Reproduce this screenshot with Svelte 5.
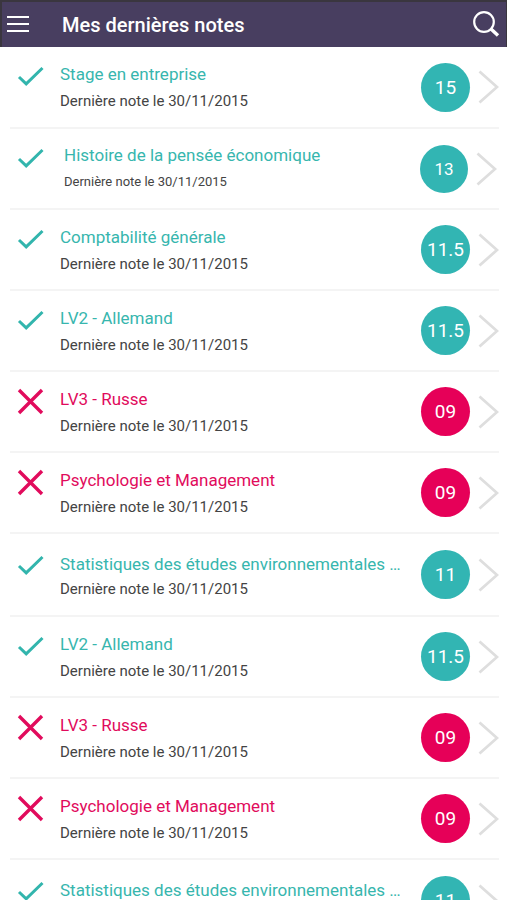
<script>
    const date = '30/11/2015';

    const notes = [
        { title: 'Stage en entreprise', note: '15', passed: true },
        { title: 'Histoire de la pensée économique', note: '13', passed: true, compact: true },
        { title: 'Comptabilité générale', note: '11.5', passed: true },
        { title: 'LV2 - Allemand', note: '11.5', passed: true },
        { title: 'LV3 - Russe', note: '09', passed: false },
        { title: 'Psychologie et Management', note: '09', passed: false },
        { title: 'Statistiques des études environnementales …', note: '11', passed: true, long: true },
        { title: 'LV2 - Allemand', note: '11.5', passed: true },
        { title: 'LV3 - Russe', note: '09', passed: false },
        { title: 'Psychologie et Management', note: '09', passed: false },
        { title: 'Statistiques des études environnementales …', note: '11', passed: true, long: true }
    ];
</script>

<style>
    :global(body) {
        font-family: Roboto, sans-serif;
        background: #fff;
        color: #444;
    }

    .screen {
        height: 100vh;
        display: flex;
        flex-direction: column;
        overflow: hidden;
    }

    header {
        display: flex;
        align-items: center;
        flex: none;
        height: 47px;
        box-sizing: border-box;
        padding: 0 6px 0 4px;
        background: #483e60;
        border: solid #3a363f;
        border-width: 2px 1px 0 2px;
    }

    header button {
        display: flex;
        padding: 0;
        border: none;
        background: none;
        cursor: pointer;
    }

    h1 {
        flex: 1;
        margin: 0 0 0 32px;
        color: #fff;
        font-size: 20px;
        line-height: 24px;
        font-weight: 500;
    }

    ul {
        flex: 1;
        min-height: 0;
        overflow: hidden;
        margin: 0;
        padding: 0 8px 0 10px;
        list-style: none;
    }

    li {
        border-bottom: 2px solid #f4f4f4;
    }

    .row {
        display: flex;
        align-items: center;
        height: 79px;
        color: inherit;
        text-decoration: none;
    }

    li:first-child .row {
        height: 80px;
    }

    .status {
        flex: none;
        align-self: flex-start;
        margin: 16px 16px 0 7px;
    }

    .text {
        flex: 1;
        min-width: 0;
        align-self: flex-start;
        padding-top: 16px;
    }

    .title, .date {
        display: block;
        white-space: nowrap;
    }

    .title {
        margin-bottom: 6px;
        font-size: 17px;
        line-height: 22px;
        color: #37b6ae;
    }

    .date {
        font-size: 15px;
        line-height: 20px;
    }

    .note {
        flex: none;
        display: flex;
        align-items: center;
        justify-content: center;
        width: 49px;
        height: 49px;
        margin-right: 8px;
        border-radius: 50%;
        background: #32b5b3;
        color: #fff;
        font-size: 19px;
    }

    .failed .title {
        color: #e10b5c;
    }

    .failed .note {
        background: #e60058;
    }

    .chevron {
        flex: none;
    }

    .compact .text {
        padding: 15px 0 0 4px;
    }

    .compact .date {
        font-size: 13px;
    }

    .compact .note {
        width: 48px;
        height: 48px;
        font-size: 17px;
    }

    .compact .chevron {
        margin-right: 2px;
    }

    .long {
        height: 80px;
    }

    li:nth-child(n + 7) .long {
        height: 81px;
    }

    .long .status {
        margin-top: 18px;
    }

    .long .text {
        padding-top: 19px;
    }

    .long .title {
        margin-bottom: 4px;
    }
</style>

<div class="screen">
    <header>
        <button aria-label="Menu">
            <svg width="24" height="20" viewBox="0 0 24 20" stroke="#fff" stroke-width="2">
                <path d="M1 2H23M1 9H23M1 16H23" />
            </svg>
        </button>
        <h1>Mes dernières notes</h1>
        <button aria-label="Rechercher">
            <svg width="28" height="28" viewBox="0 0 28 28" fill="none" stroke="#fff">
                <circle cx="12" cy="11" r="9.8" stroke-width="2.2" />
                <path d="M18.5 17.5L26 24.5" stroke-width="3.4" />
            </svg>
        </button>
    </header>

    <ul>
        {#each notes as item}
            <li>
                <a class="row" class:failed={!item.passed} class:compact={item.compact} class:long={item.long} href="#note">
                    <svg class="status" width="27" height="27" viewBox="0 0 27 27" fill="none">
                        {#if item.passed}
                            <path d="M2 14L9.2 20.8L25.5 5" stroke="#32b5ad" stroke-width="3" />
                        {:else}
                            <path d="M2 2L25 25M25 2L2 25" stroke="#e10b5c" stroke-width="3.4" />
                        {/if}
                    </svg>
                    <span class="text">
                        <span class="title">{item.title}</span>
                        <span class="date">Dernière note le {date}</span>
                    </span>
                    <span class="note">{item.note}</span>
                    <svg class="chevron" width="21" height="34" viewBox="0 0 21 34" fill="none" stroke="#dedede" stroke-width="2.8">
                        <path d="M1.5 1.5L19 17L1.5 32.5" />
                    </svg>
                </a>
            </li>
        {/each}
    </ul>
</div>
